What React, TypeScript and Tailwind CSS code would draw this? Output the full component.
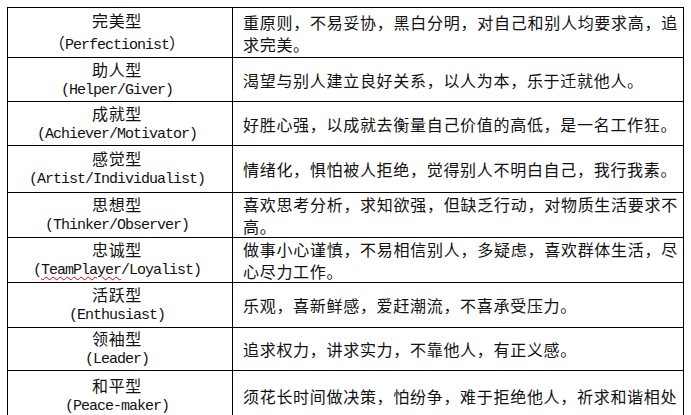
const cjk = '"Noto Sans CJK SC", "Noto Sans CJK JP", sans-serif';

type Row = { name: string; en: React.ReactNode; lines: string[]; h: string };

const rows: Row[] = [
  {
    name: "完美型",
    en: (
      <>
        <span style={{ fontFamily: cjk }} className="text-[16px] tracking-normal">（</span>
        Perfectionist
        <span style={{ fontFamily: cjk }} className="text-[16px] tracking-normal">）</span>
      </>
    ),
    lines: ["重原则，不易妥协，黑白分明，对自己和别人均要求高，追", "求完美。"],
    h: "h-[50px]",
  },
  { name: "助人型", en: "(Helper/Giver)", lines: ["渴望与别人建立良好关系，以人为本，乐于迁就他人。"], h: "h-[44px]" },
  { name: "成就型", en: "(Achiever/Motivator)", lines: ["好胜心强，以成就去衡量自己价值的高低，是一名工作狂。"], h: "h-[44px]" },
  { name: "感觉型", en: "(Artist/Individualist)", lines: ["情绪化，惧怕被人拒绝，觉得别人不明白自己，我行我素。"], h: "h-[47px]" },
  {
    name: "思想型",
    en: "(Thinker/Observer)",
    lines: ["喜欢思考分析，求知欲强，但缺乏行动，对物质生活要求不", "高。"],
    h: "h-[45px]",
  },
  {
    name: "忠诚型",
    en: (
      <>
        (<span className="underline decoration-wavy decoration-red-600 decoration-1 underline-offset-2">TeamPlayer</span>/Loyalist)
      </>
    ),
    lines: ["做事小心谨慎，不易相信别人，多疑虑，喜欢群体生活，尽", "心尽力工作。"],
    h: "h-[45px]",
  },
  { name: "活跃型", en: "(Enthusiast)", lines: ["乐观，喜新鲜感，爱赶潮流，不喜承受压力。"], h: "h-[45px]" },
  { name: "领袖型", en: "(Leader)", lines: ["追求权力，讲求实力，不靠他人，有正义感。"], h: "h-[43px]" },
  { name: "和平型", en: "(Peace-maker)", lines: ["须花长时间做决策，怕纷争，难于拒绝他人，祈求和谐相处"], h: "h-[50px]" },
];

export default function App() {
  return (
    <div className="w-[691px] h-[415px] overflow-hidden bg-white pl-[7px] pt-[7px] text-[#111]">
      <div className="w-[677px] border-l border-t border-r border-black">
        {rows.map((r) => (
          <div key={r.name} className={`flex border-b border-black ${r.h}`}>
            <div className="w-[225px] shrink-0 border-r border-black flex flex-col items-center justify-center leading-[22px] pr-[6px]">
              <div style={{ fontFamily: cjk }} className="text-[16px] tracking-[0.7px] leading-[22px]">
                {r.name}
              </div>
              <div
                style={{ fontFamily: '"Liberation Mono", monospace' }}
                className="text-[15px] tracking-[-1px] leading-[22px] whitespace-nowrap"
              >
                {r.en}
              </div>
            </div>
            <div
              style={{ fontFamily: cjk }}
              className="flex-1 flex flex-col justify-center pl-[10px] pr-[5px] text-[16px] tracking-[0.7px] leading-[22px]"
            >
              {r.lines.map((l, i) => (
                <div
                  key={i}
                  className={`whitespace-nowrap ${i < r.lines.length - 1 ? "[text-align-last:justify]" : ""}`}
                >
                  {l}
                </div>
              ))}
            </div>
          </div>
        ))}
      </div>
    </div>
  );
}
